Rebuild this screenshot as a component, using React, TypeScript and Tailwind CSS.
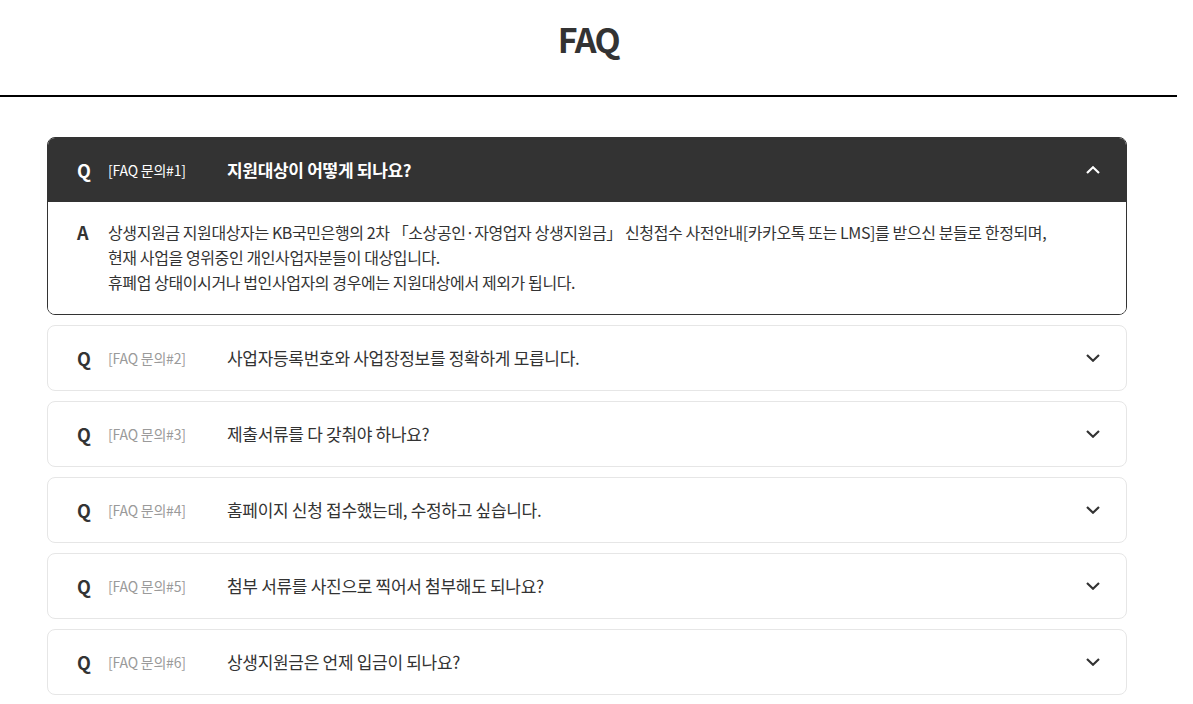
import React from "react";

const faqs = [
  "사업자등록번호와 사업장정보를 정확하게 모릅니다.",
  "제출서류를 다 갖춰야 하나요?",
  "홈페이지 신청 접수했는데, 수정하고 싶습니다.",
  "첨부 서류를 사진으로 찍어서 첨부해도 되나요?",
  "상생지원금은 언제 입금이 되나요?",
];

function Chevron({ up, color }: { up?: boolean; color: string }) {
  return (
    <svg width="14" height="8" viewBox="0 0 14 8" fill="none" className="shrink-0">
      <polyline
        points={up ? "1,7 7,1.3 13,7" : "1,1 7,6.7 13,1"}
        stroke={color}
        strokeWidth="2.2"
        strokeLinecap="butt"
        strokeLinejoin="miter"
      />
    </svg>
  );
}

export default function App() {
  return (
    <div className="w-[1177px] bg-white font-['Noto_Sans_CJK_KR',sans-serif] text-[#333]">
      <div className="h-[95px] pt-[20px] text-center">
        <h1 className="text-[34px] leading-[38px] font-bold tracking-[-1.5px] text-[#333]">FAQ</h1>
      </div>
      <div className="h-[2px] bg-black" />
      <div className="pl-[47px] pt-[40px] pb-[9px] flex flex-col gap-[10px]">
        <div className="w-[1080px] rounded-[8px] border border-[#333] overflow-hidden">
          <div className="h-[64px] bg-[#333] flex items-center pl-[29px] pr-[26px]">
            <span className="w-[31px] text-[18px] font-bold text-white leading-none">Q</span>
            <span className="w-[119px] text-[14px] text-white tracking-[-0.2px]">[FAQ 문의#1]</span>
            <span className="flex-1 text-[17px] font-bold text-white tracking-[-0.3px]">지원대상이 어떻게 되나요?</span>
            <Chevron up color="#ffffff" />
          </div>
          <div className="flex pl-[29px] pt-[18px] pb-[19px] bg-white">
            <span className="w-[31px] text-[18px] font-bold leading-[25px] text-[#333]">A</span>
            <p className="text-[16px] leading-[25px] tracking-[-0.4px] text-[#333]">
              상생지원금 지원대상자는 KB국민은행의 2차 「소상공인·자영업자 상생지원금」 신청접수 사전안내[카카오톡 또는 LMS]를 받으신 분들로 한정되며,
              <br />
              현재 사업을 영위중인 개인사업자분들이 대상입니다.
              <br />
              휴폐업 상태이시거나 법인사업자의 경우에는 지원대상에서 제외가 됩니다.
            </p>
          </div>
        </div>
        {faqs.map((q, i) => (
          <div
            key={i}
            className="w-[1080px] h-[66px] rounded-[8px] border border-[#e6e6e6] bg-white flex items-center pl-[29px] pr-[26px]"
          >
            <span className="w-[31px] text-[18px] font-bold text-[#333] leading-none">Q</span>
            <span className="w-[119px] text-[14px] text-[#9a9a9a] tracking-[-0.2px]">[FAQ 문의#{i + 2}]</span>
            <span className="flex-1 text-[17px] font-normal text-[#333] tracking-[-0.3px]">{q}</span>
            <Chevron color="#333333" />
          </div>
        ))}
      </div>
    </div>
  );
}
